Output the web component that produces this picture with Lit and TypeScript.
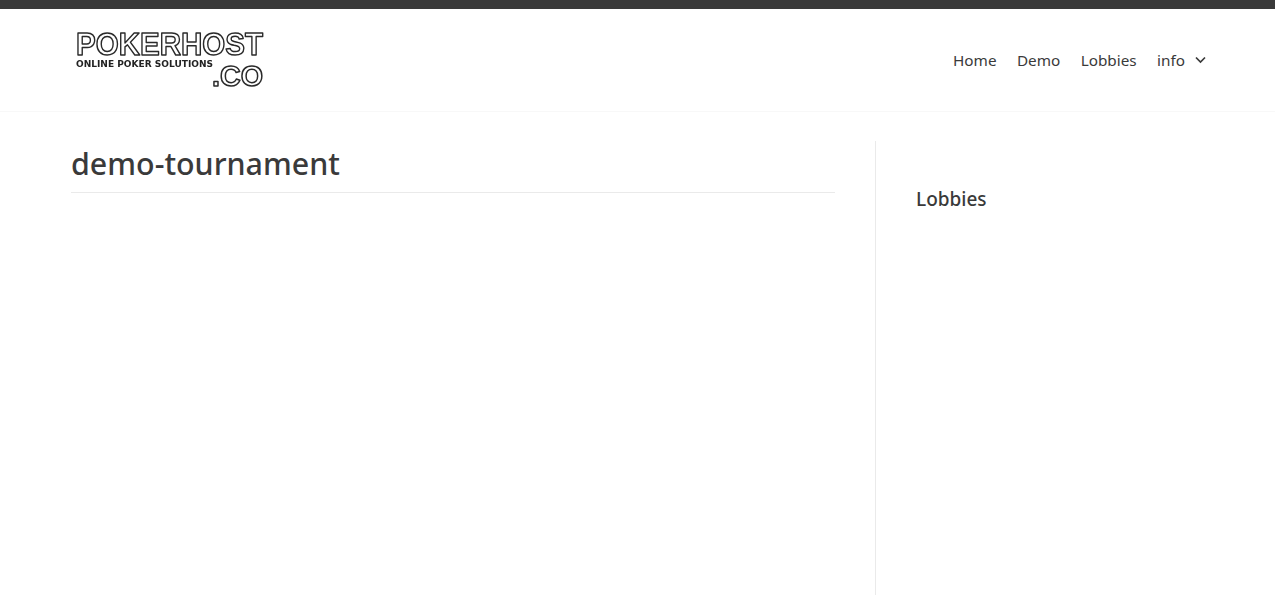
import { LitElement, html, css } from "lit";
import { customElement } from "lit/decorators.js";

@customElement("app-root")
export class AppRoot extends LitElement {
  static styles = css`
    :host {
      display: flex;
      flex-direction: column;
      height: 595px;
      overflow: hidden;
      background: #fff;
      color: #3a3a3a;
      font-family: "Noto Sans", "Open Sans", sans-serif;
    }
    .topbar { height: 9px; background: #3a3a3a; flex: none; }
    .header {
      flex: none;
      height: 103px;
      box-sizing: border-box;
      border-bottom: 1px solid #f8f8f8;
      padding: 0 69px 0 71px;
      display: flex;
      align-items: center;
      justify-content: space-between;
    }
    .logo { width: 196px; height: 62px; display: block; overflow: visible; filter: blur(0.35px); }
    .big {
      font-family: "Liberation Sans", sans-serif;
      font-weight: 700;
      fill: #fff;
      stroke: #2a2a2a;
      stroke-width: 1.5px;
      stroke-linejoin: round;
    }
    .name { font-size: 32px; }
    .tld { font-size: 29px; }
    .small {
      font-family: "DejaVu Sans", sans-serif;
      font-size: 8.8px;
      font-weight: 700;
      fill: #222;
    }
    nav { display: flex; align-items: center; gap: 20.4px; font-size: 15.3px; }
    nav a { color: #3a3a3a; text-decoration: none; }
    .info { display: flex; align-items: center; gap: 10px; }
    .chev { width: 11px; height: 8px; display: block; }
    .body { flex: 1; display: flex; padding: 29px 70px 0 71px; min-height: 0; }
    main { width: 764px; flex: none; }
    h1 {
      margin: 0;
      font-size: 30.4px;
      font-weight: 500;
      line-height: 45px;
      height: 52px;
      box-sizing: border-box;
      border-bottom: 1px solid #eaeaea;
    }
    aside {
      margin-left: 40px;
      flex: 1;
      border-left: 1px solid #eaeaea;
      padding: 45px 0 0 40px;
    }
    h2 { margin: 0; font-size: 19px; font-weight: 500; line-height: 27px; }
  `;

  render() {
    return html`
      <div class="topbar"></div>
      <header class="header">
        <svg class="logo" viewBox="0 0 196 62" role="img" aria-label="Pokerhost.co">
          <text class="big name" x="5" y="26" textLength="187" lengthAdjust="spacingAndGlyphs">POKERHOST</text>
          <text class="small" x="5" y="38" textLength="137" lengthAdjust="spacingAndGlyphs">ONLINE POKER SOLUTIONS</text>
          <text class="big tld" x="141" y="57" textLength="51" lengthAdjust="spacingAndGlyphs">.CO</text>
        </svg>
        <nav>
          <a href="#">Home</a>
          <a href="#">Demo</a>
          <a href="#">Lobbies</a>
          <a href="#" class="info">info
            <svg class="chev" viewBox="0 0 11 8"><path d="M1 1.5 5.5 6 10 1.5" fill="none" stroke="#3a3a3a" stroke-width="1.7"/></svg>
          </a>
        </nav>
      </header>
      <div class="body">
        <main><h1>demo-tournament</h1></main>
        <aside><h2>Lobbies</h2></aside>
      </div>
    `;
  }
}
